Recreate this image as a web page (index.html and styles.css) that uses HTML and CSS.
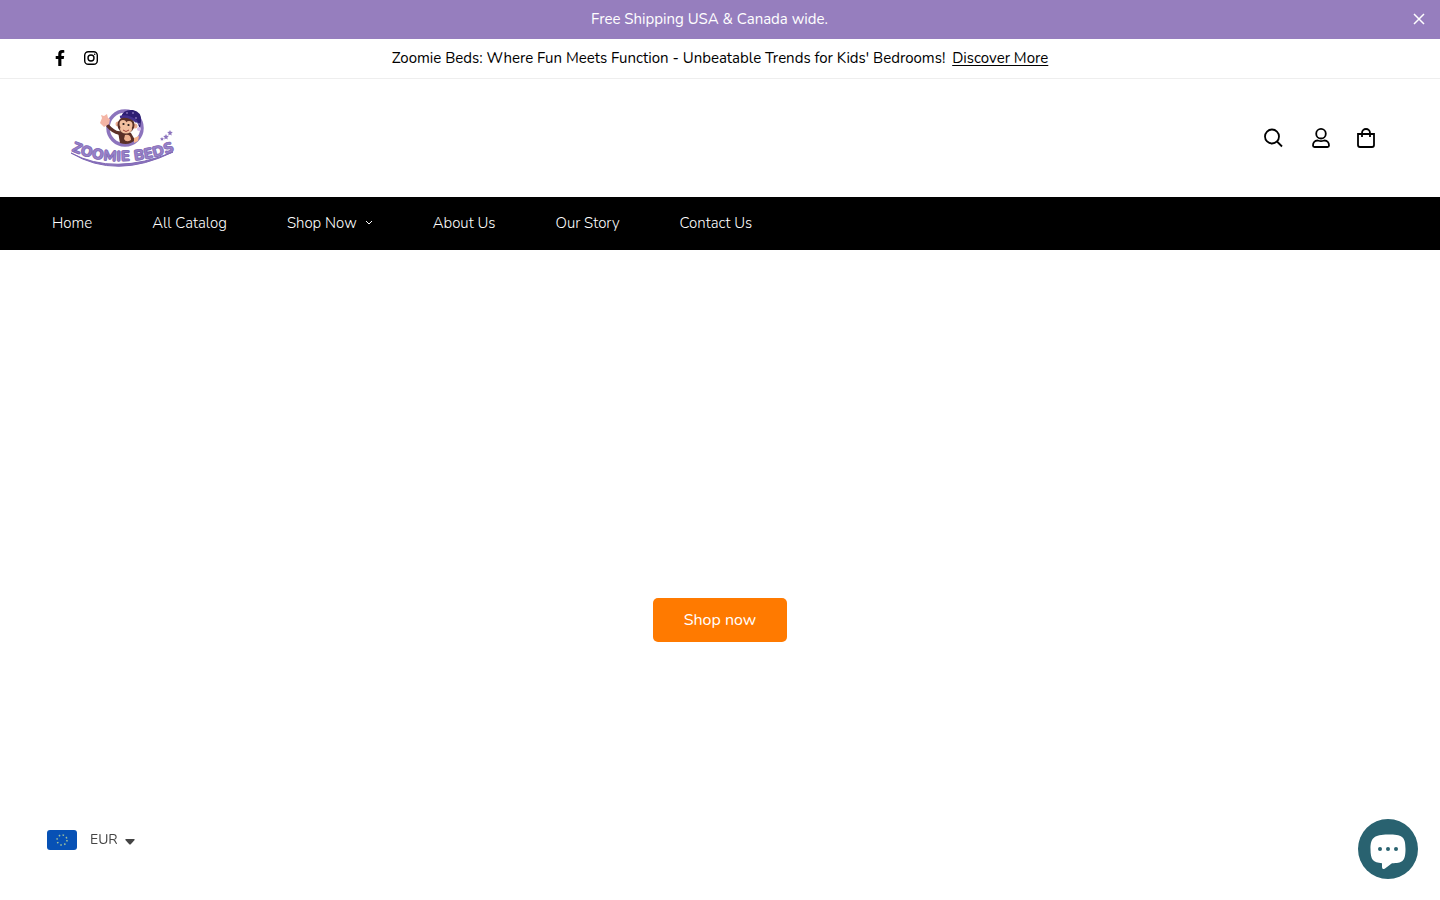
FILE: index.html
```html
<!DOCTYPE html>
<html lang="en">
<head>
  <meta charset="UTF-8">
  <meta name="viewport" content="width=device-width, initial-scale=1.0">
  <title>Zoomie Beds</title>
  <link rel="stylesheet" href="styles.css">
</head>
<body>
  <!-- Announcement -->
  <div class="announcement">
    <p>Free Shipping USA &amp; Canada wide.</p>
    <button type="button" class="close-btn" aria-label="Close">
      <svg width="12" height="12" viewBox="0 0 12 12"><path d="M1 1l10 10M11 1L1 11"/></svg>
    </button>
  </div>

  <!-- Top bar -->
  <div class="topbar">
    <div class="social">
      <a href="#" aria-label="Facebook">
        <svg width="16" height="16" viewBox="0 0 320 512" fill="#000"><path d="M279.1 288l14.2-92.700h-88.900v-60.100c0-25.300 12.400-50.100 52.200-50.100h40.400V6.300S260.400 0 225.400 0c-73.200 0-121.100 44.400-121.100 124.700v70.600H22.900V288h81.400v224h100.200V288z"/></svg>
      </a>
      <a href="#" aria-label="Instagram">
        <svg width="16" height="16" viewBox="0 0 16 16" fill="none" stroke="#000" stroke-width="1.400"><rect x="1.700" y="1.700" width="12.600" height="12.600" rx="3.600"/><circle cx="8" cy="8" r="3"/><circle cx="11.700" cy="4.300" r=".8" fill="#000" stroke="none"/></svg>
      </a>
    </div>
    <p class="message">Zoomie Beds: Where Fun Meets Function - Unbeatable Trends for Kids' Bedrooms! <a href="#">Discover More</a></p>
  </div>

  <!-- Header -->
  <header class="header">
    <a href="#" class="logo" aria-label="Zoomie Beds">
      <svg width="133" height="76" viewBox="-8 0 133 76">
        <defs><path id="arc" d="M11 51Q59 72 118 50"/></defs>
        <circle cx="65" cy="28" r="17" fill="#fff" stroke="#8c74bd" stroke-width="3.500"/>
        <path d="M59 33q-6-1-11-7" fill="none" stroke="#5b3028" stroke-width="3.500" stroke-linecap="round"/>
        <path d="M58 32q7-3 13 1l4 7q-6 6-15 3z" fill="#5b3028"/>
        <circle cx="58" cy="24" r="2.500" fill="#e9ac91"/>
        <circle cx="75" cy="26" r="2.500" fill="#e9ac91"/>
        <circle cx="66" cy="25" r="8.500" fill="#5b3028"/>
        <ellipse cx="63" cy="24" rx="3.500" ry="4" fill="#f3bf9f"/>
        <ellipse cx="69" cy="25" rx="3.500" ry="4" fill="#f3bf9f"/>
        <ellipse cx="66" cy="29" rx="6" ry="4.500" fill="#f3bf9f"/>
        <circle cx="63.500" cy="24" r="1.100" fill="#231818"/>
        <circle cx="68.500" cy="25" r="1.100" fill="#231818"/>
        <path d="M63 30q3 3 6 0" fill="none" stroke="#a4433c"/>
        <path d="M65 35q6-1 6 5-5 3-7-1z" fill="#efb08f"/>
        <path d="M74 38l5-2-1 5-4 2z" fill="#f6b48d"/>
        <path d="M44 27l-4-4 2-5-1-3 3 1 3-2 1 4 2 1-1 5z" fill="#f4b5a5"/>
        <path d="M61 17q2-8 12-7 9 2 8 11l-1 8-3-7q-6-5-16-5z" fill="#2d1e72"/>
        <path d="M60 17q9-2 17 5" fill="none" stroke="#44308c" stroke-width="2.500"/>
        <g fill="#b8a1df">
          <circle cx="67" cy="13" r=".8"/><circle cx="73" cy="13" r=".8"/><circle cx="76" cy="18" r=".8"/><circle cx="79" cy="24" r=".8"/>
        </g>
        <circle cx="79" cy="29" r="2" fill="#d6bdec"/>
        <g fill="#8c74bd">
          <path d="M110 30l.8 1.700 2 .3-1.500 1.400.4 2-1.700-1-1.700 1 .4-2-1.500-1.400 2-.3z"/>
          <path d="M106 34l.8 1.700 2 .3-1.500 1.400.4 2-1.700-1-1.700 1 .4-2-1.500-1.400 2-.3z"/>
          <path d="M102 37l.6 1.200 1.400.2-1 1 .2 1.400-1.200-.7-1.200.7.2-1.400-1-1 1.400-.2z"/>
        </g>
        <path d="M11 53Q54 76 113 52Q56 80 11 53z" fill="#8c74bd" stroke="#8068b5"/>
        <text class="logo-text"><textPath href="#arc">ZOOMIE BEDS</textPath></text>
      </svg>
    </a>
    <div class="header-icons">
      <button type="button" aria-label="Search">
        <svg width="20" height="20" viewBox="0 0 20 20"><circle cx="8" cy="8.500" r="7"/><path d="M13 13.500l5 5"/></svg>
      </button>
      <a href="#" aria-label="Account">
        <svg width="20" height="20" viewBox="0 0 20 20"><circle cx="11" cy="5.700" r="4.800"/><path d="M7.500 12.500C4.500 12.500 3 15 3 17.500c0 1 .5 1.500 1.500 1.500h13c1 0 1.500-.5 1.500-1.500 0-2.500-1.500-5-4.500-5-1 0-1.500.7-3.500.7s-2.500-.7-3.500-.7z"/></svg>
      </a>
      <a href="#" aria-label="Cart">
        <svg width="20" height="20" viewBox="0 0 20 20"><path d="M2 6h16v11q0 2-2 2H4q-2 0-2-2zM6 9V5a4 4 0 0 1 8 0v4"/></svg>
      </a>
    </div>
  </header>

  <!-- Menu -->
  <nav class="menu">
    <a href="#">Home</a>
    <a href="#">All Catalog</a>
    <a href="#">Shop Now
      <svg width="8" height="6" viewBox="0 0 8 6"><path d="M1 1l3 3 3-3"/></svg>
    </a>
    <a href="#">About Us</a>
    <a href="#">Our Story</a>
    <a href="#">Contact Us</a>
  </nav>

  <main class="hero">
    <a href="#" class="shop-btn">Shop now</a>
  </main>

  <!-- Currency -->
  <div class="currency">
    <svg width="30" height="20" viewBox="0 0 30 20">
      <rect width="30" height="20" rx="3" fill="#0751b5"/>
      <circle cx="15" cy="10" r="5" fill="none" stroke="#9fc19c" stroke-width="1.500" stroke-dasharray="1.500 2.427"/>
    </svg>
    <select aria-label="Currency">
      <option>EUR</option>
    </select>
    <svg width="10" height="10" viewBox="0 0 10 10"><path d="M1 4h8q1 0 .6 1L6 9q-1 1-2 0L.4 5Q0 4 1 4z" fill="#444"/></svg>
  </div>

  <button type="button" class="chat-btn" aria-label="Chat">
    <svg width="60" height="60" viewBox="0 0 60 60">
      <path d="M30 15.500c14 0 17.500 1.500 17.500 14.500S44 44 34 44.200L27 49.500q-3 1.500-3-1.500v-3.800C15 43.500 12.500 41 12.500 30S16 15.500 30 15.500z" fill="#fff"/>
      <g fill="#296270"><circle cx="22" cy="30" r="2"/><circle cx="30" cy="30" r="2"/><circle cx="38" cy="30" r="2"/></g>
    </svg>
  </button>
</body>
</html>
```
FILE: styles.css
```css
* {
  box-sizing: border-box;
  margin: 0;
  padding: 0;
}

body {
  font-family: Nunito, "Open Sans", sans-serif;
  font-size: 15px;
  line-height: 24px;
  color: #000;
  background: #fff;
}

a {
  color: inherit;
}

button {
  border: none;
  background: none;
  cursor: pointer;
}

svg {
  display: block;
}

/* Announcement */
.announcement {
  display: flex;
  align-items: center;
  height: 39px;
  padding: 0 15px 2px 6px;
  background: #967ebe;
  color: #fff;
}

.announcement p {
  flex: 1;
  text-align: center;
}

.close-btn svg {
  stroke: #fff;
  stroke-width: 1.5;
}

/* Top bar */
.topbar {
  display: grid;
  grid-template-columns: 1fr auto 1fr;
  align-items: center;
  height: 40px;
  padding: 0 52px 2px;
  border-bottom: 1px solid #eee;
}

.social {
  display: flex;
  gap: 15px;
}

.message a {
  margin-left: 3px;
  text-underline-offset: 2px;
}

/* Header */
.header {
  display: flex;
  align-items: center;
  justify-content: space-between;
  height: 118px;
  padding: 0 64px 0 52px;
}

.logo-text {
  font-size: 15px;
  font-weight: 900;
  fill: #9983c9;
  stroke: #8068b5;
  stroke-width: 0.8;
}

.header-icons {
  display: flex;
  align-items: center;
  gap: 26px;
}

.header-icons svg {
  fill: none;
  stroke: #000;
  stroke-width: 1.8;
}

/* Menu */
.menu {
  display: flex;
  align-items: center;
  gap: 60px;
  height: 53px;
  padding: 0 52px 2px;
  background: #000;
  color: #fff;
  font-weight: 300;
}

.menu a {
  display: flex;
  align-items: center;
  gap: 8px;
  text-decoration: none;
}

.menu svg {
  fill: none;
  stroke: #fff;
}

.hero {
  display: flex;
  align-items: flex-end;
  justify-content: center;
  min-height: calc(100vh - 250px);
  padding-bottom: 258px;
}

.shop-btn {
  padding: 10px 31px;
  border-radius: 5px;
  background: #ff7a00;
  color: #fff;
  font-size: 16px;
  text-decoration: none;
}

/* Floating widgets */
.currency {
  position: fixed;
  left: 47px;
  bottom: 48px;
  display: flex;
  align-items: center;
}

.currency select {
  margin: 0 7px 0 13px;
  border: none;
  appearance: none;
  background: none;
  color: #444;
  font-family: inherit;
  font-size: 14px;
  line-height: 24px;
}

.chat-btn {
  position: fixed;
  right: 22px;
  bottom: 21px;
  border-radius: 50%;
  background: #296270;
}
```
